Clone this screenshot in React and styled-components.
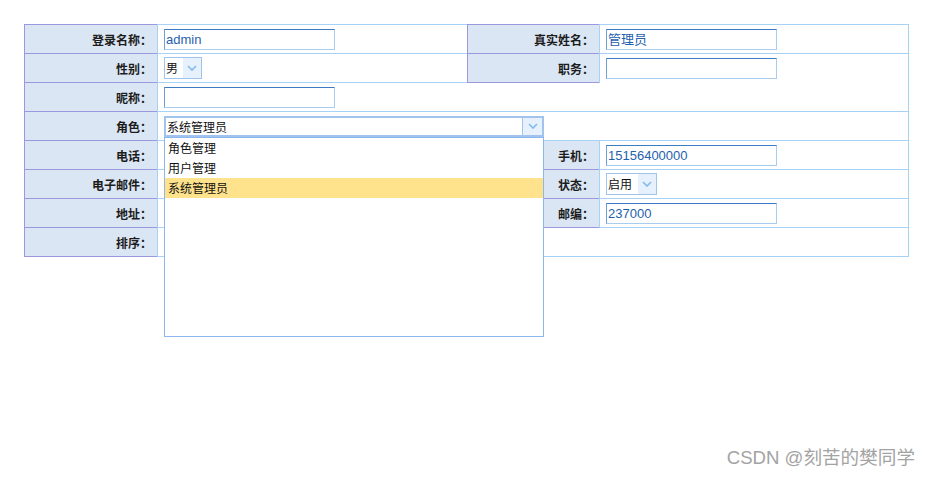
import React from "react";
import styled, { createGlobalStyle } from "styled-components";

const Global = createGlobalStyle`
  html, body { margin: 0; padding: 0; background: #fff; }
  body { font-family: "Noto Sans CJK SC", "Liberation Sans", sans-serif; }
`;

const PURPLE = "#9b98dd";
const BLUE = "#a6d2f6";

const Page = styled.div`
  position: relative;
  width: 930px;
  height: 477px;
  box-sizing: border-box;
  padding: 24px 0 0 24px;
  background: #fff;
  overflow: hidden;
`;

const FormTable = styled.table`
  border-collapse: separate;
  border-spacing: 0;
  table-layout: fixed;
  width: 885px;
`;

const Label = styled.td`
  box-sizing: border-box;
  width: ${(p) => (p.$w ? `${p.$w}px` : "auto")};
  height: ${(p) => (p.$top ? 30 : 29)}px;
  padding: 0 5px 0 0;
  text-align: right;
  vertical-align: middle;
  background: #dbe6f4;
  border-left: 1px solid ${PURPLE};
  border-bottom: 1px solid ${PURPLE};
  border-top: ${(p) => (p.$top ? `1px solid ${PURPLE}` : "none")};
  font: bold 12px "Noto Sans CJK SC", "Liberation Sans", sans-serif;
  color: #1c1c1c;
  white-space: nowrap;
`;

const Value = styled.td`
  box-sizing: border-box;
  width: ${(p) => (p.$w ? `${p.$w}px` : "auto")};
  height: ${(p) => (p.$top ? 30 : 29)}px;
  padding: 0 0 0 6px;
  vertical-align: middle;
  background: #fff;
  border-left: ${(p) => (p.$noLeft ? "none" : `1px solid ${BLUE}`)};
  border-right: ${(p) => (p.$last ? `1px solid ${BLUE}` : "none")};
  border-bottom: ${(p) => (p.$noBottom ? "none" : `1px solid ${BLUE}`)};
  border-top: ${(p) => (p.$top ? `1px solid ${BLUE}` : "none")};
`;

const TextInput = styled.div`
  box-sizing: border-box;
  width: 171px;
  height: 21px;
  border: 1px solid #a9cdf0;
  border-top-color: #3d7cc2;
  border-left-color: #6f9fd6;
  padding-left: 1px;
  font: 13px/19px "Liberation Sans", "Noto Sans CJK SC", sans-serif;
  color: #1f5fae;
  white-space: nowrap;
  overflow: hidden;
`;

const Select = styled.div`
  box-sizing: border-box;
  display: flex;
  width: ${(p) => p.$w}px;
  height: 22px;
  border: 1px solid #9fc4ee;
  background: #fff;
`;

const SelectText = styled.span`
  flex: 1;
  padding-left: 1px;
  font: 12px/20px "Noto Sans CJK SC", "Liberation Sans", sans-serif;
  color: #111;
  white-space: nowrap;
  overflow: hidden;
`;

const SelectButton = styled.span`
  display: flex;
  align-items: center;
  justify-content: center;
  width: ${(p) => p.$w || 18}px;
  background: #e6f1fd;
  border-left: ${(p) => (p.$line ? "1px solid #a3c4ef" : "none")};
`;

const Combo = styled.div`
  position: relative;
  box-sizing: border-box;
  display: flex;
  width: 380px;
  height: 21px;
  border: 2px solid #a3c3ef;
  background: #fff;
`;

const ComboText = styled.span`
  flex: 1;
  padding-left: 1px;
  font: 12px/17px "Noto Sans CJK SC", "Liberation Sans", sans-serif;
  color: #111;
  white-space: nowrap;
`;

const DropList = styled.ul`
  position: absolute;
  z-index: 5;
  left: -2px;
  top: calc(100% + 2px);
  box-sizing: border-box;
  width: 380px;
  height: 200px;
  margin: 0;
  padding: 0;
  list-style: none;
  background: #fff;
  border: 1px solid #8db7ec;
`;

const DropItem = styled.li`
  height: 20px;
  padding-left: 3px;
  font: 12px/20px "Noto Sans CJK SC", "Liberation Sans", sans-serif;
  color: #111;
  background: ${(p) => (p.$active ? "#ffe28c" : "transparent")};
`;

const Watermark = styled.div`
  position: absolute;
  right: 15px;
  bottom: 8px;
  font: 18.6px "Liberation Sans", "Noto Sans CJK SC", sans-serif;
  color: #a3a3a3;
  white-space: nowrap;
`;

const Chevron = () => (
  <svg width="10" height="6" viewBox="0 0 10 6">
    <path d="M1 1 L5 5 L9 1" fill="none" stroke="#86bbee" strokeWidth="1.7" />
  </svg>
);

export default function App() {
  return (
    <Page>
      <Global />
      <FormTable>
        <tbody>
          <tr>
            <Label $w={133} $top>登录名称：</Label>
            <Value $w={310} $top>
              <TextInput>admin</TextInput>
            </Value>
            <Label $w={132} $top>真实姓名：</Label>
            <Value $w={310} $top $last>
              <TextInput>管理员</TextInput>
            </Value>
          </tr>
          <tr>
            <Label>性别：</Label>
            <Value>
              <Select $w={38}>
                <SelectText>男</SelectText>
                <SelectButton>
                  <Chevron />
                </SelectButton>
              </Select>
            </Value>
            <Label>职务：</Label>
            <Value $last $noBottom>
              <TextInput />
            </Value>
          </tr>
          <tr>
            <Label>昵称：</Label>
            <Value>
              <TextInput />
            </Value>
            <Value colSpan={2} $noLeft $last />
          </tr>
          <tr>
            <Label>角色：</Label>
            <Value colSpan={3} $last>
              <Combo>
                <ComboText>系统管理员</ComboText>
                <SelectButton $w={19} $line>
                  <Chevron />
                </SelectButton>
                <DropList>
                  <DropItem>角色管理</DropItem>
                  <DropItem>用户管理</DropItem>
                  <DropItem $active>系统管理员</DropItem>
                </DropList>
              </Combo>
            </Value>
          </tr>
          <tr>
            <Label>电话：</Label>
            <Value>
              <TextInput />
            </Value>
            <Label>手机：</Label>
            <Value $last>
              <TextInput>15156400000</TextInput>
            </Value>
          </tr>
          <tr>
            <Label>电子邮件：</Label>
            <Value>
              <TextInput />
            </Value>
            <Label>状态：</Label>
            <Value $last>
              <Select $w={51}>
                <SelectText>启用</SelectText>
                <SelectButton>
                  <Chevron />
                </SelectButton>
              </Select>
            </Value>
          </tr>
          <tr>
            <Label>地址：</Label>
            <Value>
              <TextInput />
            </Value>
            <Label>邮编：</Label>
            <Value $last>
              <TextInput>237000</TextInput>
            </Value>
          </tr>
          <tr>
            <Label>排序：</Label>
            <Value colSpan={3} $last>
              <TextInput />
            </Value>
          </tr>
        </tbody>
      </FormTable>
      <Watermark>CSDN @刻苦的樊同学</Watermark>
    </Page>
  );
}
